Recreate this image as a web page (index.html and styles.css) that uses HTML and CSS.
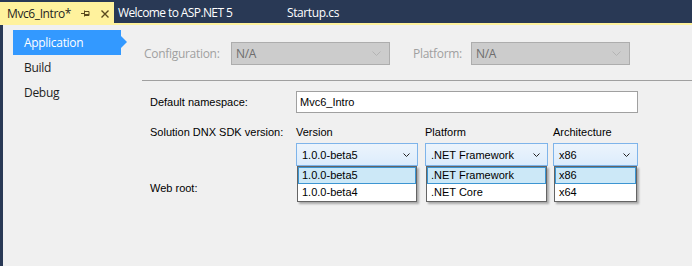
FILE: index.html
```html
<!DOCTYPE html>
<html lang="en">
<head>
    <meta charset="UTF-8">
    <title>Mvc6_Intro - Project Properties</title>
    <link rel="stylesheet" href="styles.css">
</head>
<body>

    <div class="tabbar">
        <div class="tab tab-active">
            <span>Mvc6_Intro*</span>
            <svg class="pin" width="9" height="7" viewBox="0 0 9 7">
                <path d="M0 3.5h3M3.5 0.5v6M3.5 1.5h4.5v4h-4.5M3.5 4.5h4.5" stroke="#5a4a1e" fill="none"/>
            </svg>
            <svg class="close" width="8" height="8" viewBox="0 0 8 8">
                <path d="M0.5 0.5l7 7M7.5 0.5l-7 7" stroke="#5a4a1e" stroke-width="1.4"/>
            </svg>
        </div>
        <div class="tab tab-welcome">Welcome to ASP.NET 5</div>
        <div class="tab">Startup.cs</div>
    </div>

    <div class="frame">
        <nav class="side">
            <div class="side-item selected">Application</div>
            <div class="side-item">Build</div>
            <div class="side-item">Debug</div>
        </nav>

        <main class="page">
            <div class="config-row">
                <label class="cfg-label">Configuration:</label>
                <div class="select disabled">N/A
                    <svg width="9" height="5" viewBox="0 0 9 5"><path d="M0.5 0.5l4 4 4-4" stroke="#b4b4b4" fill="none"/></svg>
                </div>
                <label class="cfg-label cfg-platform">Platform:</label>
                <div class="select disabled">N/A
                    <svg width="9" height="5" viewBox="0 0 9 5"><path d="M0.5 0.5l4 4 4-4" stroke="#b4b4b4" fill="none"/></svg>
                </div>
            </div>

            <div class="sep"></div>

            <div class="form">
                <div class="form-label">Default namespace:</div>
                <div class="textbox">Mvc6_Intro</div>

                <div class="form-label top">Solution DNX SDK version:</div>
                <div class="sdk">
                    <div class="sdk-col col-version">
                        <div class="sdk-head">Version</div>
                        <div class="combo">
                            <span>1.0.0-beta5</span>
                            <svg class="arrow" width="7" height="4" viewBox="0 0 7 4"><path d="M0.5 0.5l3 3 3-3" stroke="#222" fill="none"/></svg>
                            <ul class="droplist">
                                <li class="hot">1.0.0-beta5</li>
                                <li>1.0.0-beta4</li>
                            </ul>
                        </div>
                    </div>
                    <div class="sdk-col col-platform">
                        <div class="sdk-head">Platform</div>
                        <div class="combo">
                            <span>.NET Framework</span>
                            <svg class="arrow" width="7" height="4" viewBox="0 0 7 4"><path d="M0.5 0.5l3 3 3-3" stroke="#222" fill="none"/></svg>
                            <ul class="droplist">
                                <li class="hot">.NET Framework</li>
                                <li>.NET Core</li>
                            </ul>
                        </div>
                    </div>
                    <div class="sdk-col col-arch">
                        <div class="sdk-head">Architecture</div>
                        <div class="combo">
                            <span>x86</span>
                            <svg class="arrow" width="7" height="4" viewBox="0 0 7 4"><path d="M0.5 0.5l3 3 3-3" stroke="#222" fill="none"/></svg>
                            <ul class="droplist">
                                <li class="hot">x86</li>
                                <li>x64</li>
                            </ul>
                        </div>
                    </div>
                </div>

                <div class="form-label webroot">Web root:</div>
            </div>
        </main>
    </div>

</body>
</html>
```

FILE: styles.css
```css
body {
    margin: 0;
    width: 692px;
    height: 266px;
    overflow: hidden;
    background: #f0f0f0;
    font-family: "Liberation Sans", Arial, sans-serif;
    font-size: 11px;
    color: #000;
}

/* document tabs */
.tabbar {
    display: flex;
    align-items: flex-end;
    height: 23px;
    background: #293955;
    border-bottom: 2px solid #fff29d;
    font-family: "Open Sans", sans-serif;
    font-size: 12px;
    letter-spacing: -0.4px;
}

.tab {
    height: 21px;
    line-height: 21px;
    color: #fff;
    padding: 0 4px;
}

.tab-active {
    display: flex;
    align-items: center;
    background: #fff29d;
    color: #1e1e1e;
    width: 107px;
    padding: 0 0 0 7px;
    height: 23px;
    margin-bottom: -2px;
}

.tab-active .pin {
    margin-left: 10px;
}

.tab-active .close {
    margin-left: 11px;
}

.tab-welcome {
    width: 161px;
    letter-spacing: -0.6px;
}

/* page frame */
.frame {
    display: flex;
    height: 241px;
    border-left: 3px solid #293955;
}

.side {
    width: 139px;
    padding-top: 5px;
    font-family: "Open Sans", sans-serif;
    font-size: 12px;
    letter-spacing: -0.3px;
}

.side-item {
    position: relative;
    width: 97px;
    height: 25px;
    line-height: 25px;
    margin-left: 10px;
    padding-left: 11px;
    color: #1e1e1e;
}

.side-item.selected {
    background: #3399ff;
    color: #fff;
}

.side-item.selected::after {
    content: "";
    position: absolute;
    right: -6px;
    top: 6px;
    border-left: 6px solid #3399ff;
    border-top: 6px solid transparent;
    border-bottom: 6px solid transparent;
}

.page {
    flex: 1;
}

/* configuration / platform */
.config-row {
    display: flex;
    align-items: center;
    margin-top: 17px;
    padding-left: 2px;
    font-family: "Open Sans", sans-serif;
    font-size: 12px;
    letter-spacing: -0.3px;
}

.cfg-label {
    width: 87px;
    color: #a0a0a0;
}

.cfg-platform {
    width: 58px;
    margin-left: 23px;
}

.select {
    display: flex;
    align-items: center;
    justify-content: space-between;
    box-sizing: border-box;
    width: 159px;
    height: 23px;
    padding: 0 8px 0 4px;
}

.select.disabled {
    background: #cccccc;
    border: 1px solid #adadad;
    color: #6d6d6d;
}

.sep {
    height: 1px;
    background: #a0a0a0;
    margin-top: 15px;
}

/* form */
.form {
    display: grid;
    grid-template-columns: 146px 342px;
    padding: 10px 0 0 8px;
    align-items: center;
}

.form-label.top {
    align-self: start;
    margin-top: 12px;
    line-height: 15px;
}

.textbox {
    box-sizing: border-box;
    height: 22px;
    line-height: 20px;
    padding-left: 3px;
    background: #fff;
    border: 1px solid #a0a0a0;
}

.sdk {
    display: flex;
    margin-top: 12px;
}

.sdk-head {
    line-height: 15px;
    margin-bottom: 3px;
}

.col-version { width: 122px; }
.col-platform { width: 123px; margin-left: 7px; }
.col-arch { width: 85px; margin-left: 5px; }

.combo {
    position: relative;
    display: flex;
    align-items: center;
    justify-content: space-between;
    box-sizing: border-box;
    height: 23px;
    padding: 0 7px 0 5px;
    background: linear-gradient(#ecf4fc, #dcecfc);
    border: 1px solid #7eb4ea;
}

.droplist {
    position: absolute;
    top: 22px;
    left: 0;
    right: 0;
    z-index: 2;
    margin: 0;
    padding: 0;
    list-style: none;
    background: #fff;
    border: 1px solid #646464;
    box-shadow: 2px 2px 2px rgba(0, 0, 0, 0.3);
}

.droplist li {
    box-sizing: border-box;
    height: 17px;
    line-height: 15px;
    padding-left: 3px;
    border: 1px solid transparent;
}

.droplist li.hot {
    background: #cce8f7;
    border-color: #3c95d2;
}

.webroot {
    grid-column: 1;
    margin-top: 15px;
    line-height: 14px;
}
```
